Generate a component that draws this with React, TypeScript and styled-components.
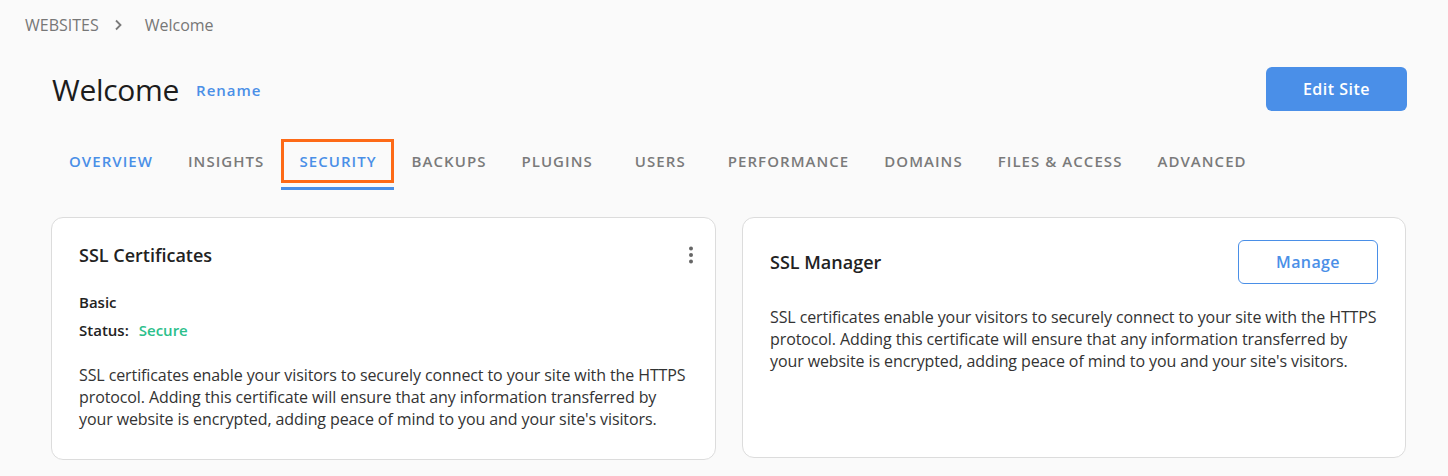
import styled, { createGlobalStyle } from 'styled-components';

const GlobalStyle = createGlobalStyle`
  body {
    margin: 0;
    background: #fafafa;
    font-family: "Open Sans", "Noto Sans", Arial, sans-serif;
    color: #222;
  }
`;

const Page = styled.div`
  width: 1448px;
  height: 476px;
  box-sizing: border-box;
  padding-top: 15px;
  overflow: hidden;
`;

const Breadcrumb = styled.div`
  display: flex;
  align-items: center;
  height: 20px;
  padding-left: 25px;
  font-size: 16px;
  color: #777;

  .sep {
    display: flex;
    margin: 0 22px 0 14px;
  }
`;

const Main = styled.div`
  padding: 0 41px 0 51px;
`;

const Header = styled.div`
  display: flex;
  align-items: center;
  justify-content: space-between;
  margin-top: 32px;
  height: 44px;
`;

const TitleGroup = styled.div`
  display: flex;
  align-items: center;
  gap: 17px;
`;

const Title = styled.h1`
  margin: 0 0 0 1px;
  font-size: 30px;
  font-weight: 400;
  color: #1c1c1c;
  letter-spacing: -0.3px;
`;

const LinkButton = styled.span`
  font-size: 15px;
  font-weight: 600;
  letter-spacing: 1px;
  color: #4a8fe7;
  margin-top: 2px;
`;

const PrimaryButton = styled.button`
  width: 141px;
  height: 44px;
  border: none;
  border-radius: 6px;
  background: #4a8fe8;
  color: #fff;
  font-family: inherit;
  font-size: 16px;
  font-weight: 600;
  letter-spacing: 0.5px;
`;

const Tabs = styled.nav`
  display: flex;
  margin-top: 28px;
`;

const Tab = styled.div<{ $active?: boolean; $highlight?: boolean; $blue?: boolean }>`
  display: flex;
  flex-direction: column;

  .label {
    box-sizing: border-box;
    min-width: 100px;
    height: 44px;
    padding: 0 14px 0 15px;
    display: flex;
    align-items: center;
    justify-content: center;
    border: 3px solid ${p => (p.$highlight ? '#fd6a17' : 'transparent')};
    font-size: 15px;
    font-weight: 600;
    letter-spacing: 1.05px;
    color: ${p => (p.$active || p.$blue ? '#4a8fe7' : '#7a7a7a')};
    white-space: nowrap;
  }

  .bar {
    height: 3px;
    margin-top: 4px;
    background: ${p => (p.$active ? '#4a8fe7' : 'transparent')};
  }
`;

const Cards = styled.div`
  display: grid;
  grid-template-columns: 665px 664px;
  gap: 26px;
  margin-top: 27px;
  align-items: start;
`;

const Card = styled.section<{ $height: number }>`
  box-sizing: border-box;
  height: ${p => p.$height}px;
  background: #fff;
  border: 1px solid #dcdcdc;
  border-radius: 12px;
  padding: 22px 27px 0 27px;
`;

const CardHead = styled.div`
  display: flex;
  align-items: center;
  justify-content: space-between;
  min-height: 30px;
`;

const CardTitle = styled.h2`
  margin: 0;
  font-size: 18px;
  font-weight: 600;
  color: #222;
`;

const Kebab = styled.span`
  display: flex;
  margin-right: -6px;
  margin-top: -1px;
`;

const Meta = styled.div`
  margin-top: 18px;
  font-size: 15px;
  font-weight: 600;
  color: #222;
  line-height: 28px;

  .ok {
    color: #2cc08b;
    margin-left: 10px;
  }
`;

const Desc = styled.p<{ $top: number }>`
  margin: ${p => p.$top}px 0 0;
  font-size: 16px;
  letter-spacing: -0.1px;
  line-height: 22px;
  color: #333;
`;

const OutlineButton = styled.button`
  width: 140px;
  height: 44px;
  background: #fff;
  border: 1px solid #4a8fe7;
  border-radius: 6px;
  color: #4a8fe7;
  font-family: inherit;
  font-size: 16px;
  font-weight: 600;
  letter-spacing: 0.4px;
`;

const tabs = ['OVERVIEW', 'INSIGHTS', 'SECURITY', 'BACKUPS', 'PLUGINS', 'USERS', 'PERFORMANCE', 'DOMAINS', 'FILES & ACCESS', 'ADVANCED'];

const text =
  "SSL certificates enable your visitors to securely connect to your site with the HTTPS protocol. Adding this certificate will ensure that any information transferred by your website is encrypted, adding peace of mind to you and your site's visitors.";

export default function App() {
  return (
    <Page>
      <GlobalStyle />
      <Breadcrumb>
        <span>WEBSITES</span>
        <span className="sep">
          <svg width="10" height="14" viewBox="0 0 10 14" fill="none">
            <path d="M3 2.5L7.5 7L3 11.5" stroke="#7a7a7a" strokeWidth="1.8" />
          </svg>
        </span>
        <span>Welcome</span>
      </Breadcrumb>
      <Main>
        <Header>
          <TitleGroup>
            <Title>Welcome</Title>
            <LinkButton>Rename</LinkButton>
          </TitleGroup>
          <PrimaryButton>Edit Site</PrimaryButton>
        </Header>
        <Tabs>
          {tabs.map(t => (
            <Tab key={t} $active={t === 'SECURITY'} $highlight={t === 'SECURITY'} $blue={t === 'OVERVIEW'}>
              <div className="label">{t}</div>
              <div className="bar" />
            </Tab>
          ))}
        </Tabs>
        <Cards>
          <Card $height={243}>
            <CardHead>
              <CardTitle>SSL Certificates</CardTitle>
              <Kebab>
                <svg width="6" height="18" viewBox="0 0 6 18">
                  <circle cx="3" cy="2.5" r="2" fill="#666" />
                  <circle cx="3" cy="9" r="2" fill="#666" />
                  <circle cx="3" cy="15.5" r="2" fill="#666" />
                </svg>
              </Kebab>
            </CardHead>
            <Meta>
              <div>Basic</div>
              <div>
                Status:<span className="ok">Secure</span>
              </div>
            </Meta>
            <Desc $top={20}>{text}</Desc>
          </Card>
          <Card $height={241}>
            <CardHead>
              <CardTitle>SSL Manager</CardTitle>
              <OutlineButton>Manage</OutlineButton>
            </CardHead>
            <Desc $top={22}>{text}</Desc>
          </Card>
        </Cards>
      </Main>
    </Page>
  );
}
